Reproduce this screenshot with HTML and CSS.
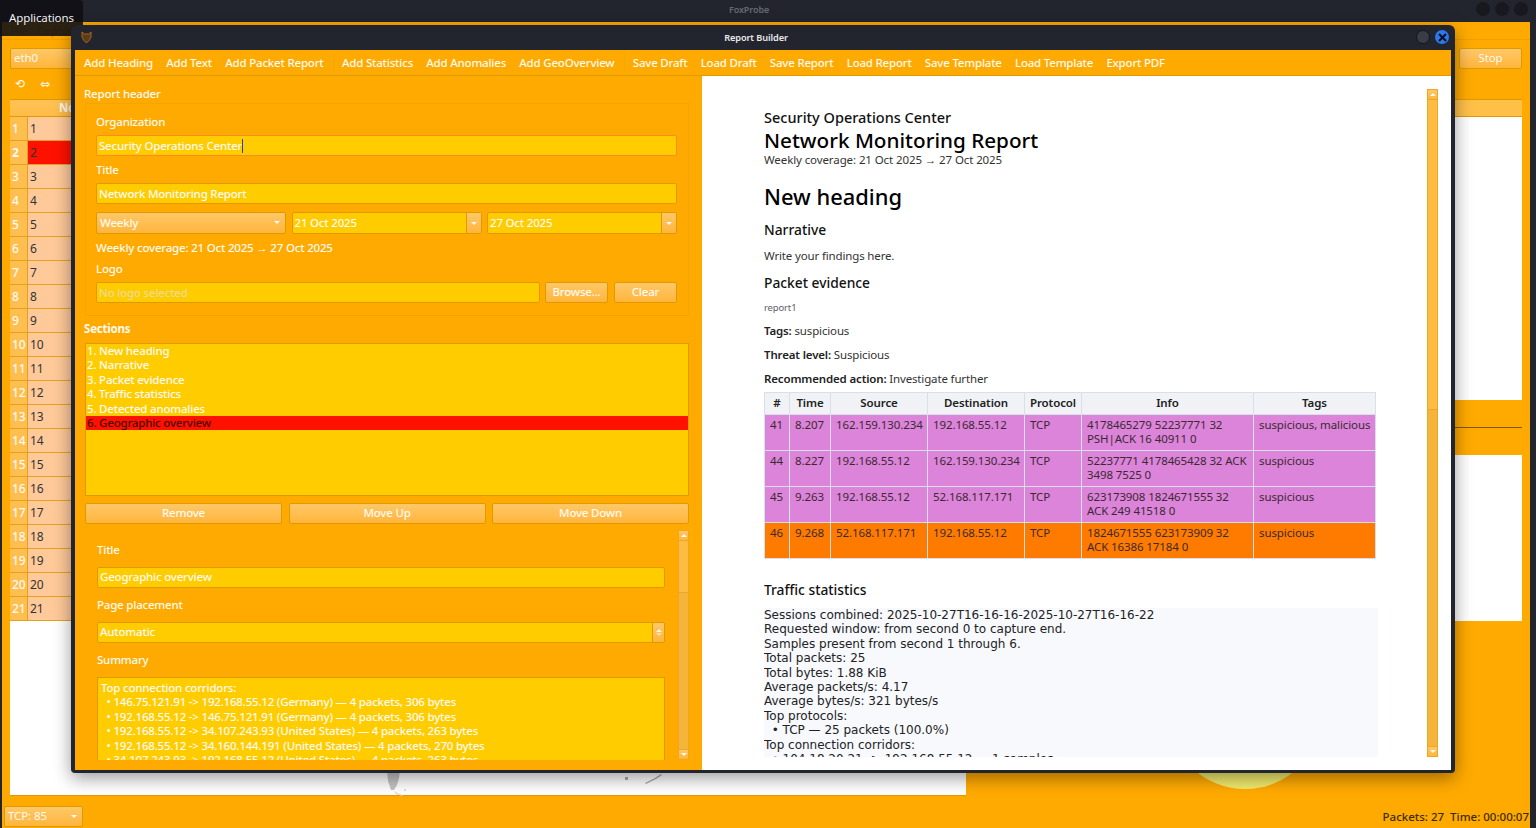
FILE: index.html
```html
<!doctype html>
<html lang="en">
<head>
  <meta charset="utf-8">
  <title>FoxProbe</title>
  <meta name="viewport" content="width=device-width, initial-scale=1">
  <link rel="stylesheet" href="styles.css">
</head>
<body>
  <div class="app">
    <div class="app-title">
      <span>FoxProbe</span>
      <div class="win-dots"><i></i><i></i><i></i></div>
    </div>
    <div class="app-body">
      <div class="menubar"><span>File</span><span>Capture</span></div>
      <div class="capture-bar">
        <div class="btn-combo iface">eth0</div>
        <button class="btn stop">Stop</button>
      </div>
      <div class="tool-icons"><span>⟲</span><span>⇔</span></div>
      <div class="split">
        <div class="packets">
          <div class="packets-head"><b>No.</b></div>
          <div class="row"><b>1</b><span>1</span></div>
          <div class="row active"><b>2</b><span>2</span></div>
          <div class="row"><b>3</b><span>3</span></div>
          <div class="row"><b>4</b><span>4</span></div>
          <div class="row"><b>5</b><span>5</span></div>
          <div class="row"><b>6</b><span>6</span></div>
          <div class="row"><b>7</b><span>7</span></div>
          <div class="row"><b>8</b><span>8</span></div>
          <div class="row"><b>9</b><span>9</span></div>
          <div class="row"><b>10</b><span>10</span></div>
          <div class="row"><b>11</b><span>11</span></div>
          <div class="row"><b>12</b><span>12</span></div>
          <div class="row"><b>13</b><span>13</span></div>
          <div class="row"><b>14</b><span>14</span></div>
          <div class="row"><b>15</b><span>15</span></div>
          <div class="row"><b>16</b><span>16</span></div>
          <div class="row"><b>17</b><span>17</span></div>
          <div class="row"><b>18</b><span>18</span></div>
          <div class="row"><b>19</b><span>19</span></div>
          <div class="row"><b>20</b><span>20</span></div>
          <div class="row"><b>21</b><span>21</span></div>
        </div>
        <div class="side">
          <div class="side-head"></div>
          <div class="side-top"></div>
          <div class="side-gap"><hr></div>
          <div class="side-bottom"></div>
        </div>
      </div>
      <div class="lower">
        <div class="map">
          <svg class="map-land" width="300" height="30" viewBox="0 0 300 30">
            <path d="M7 0h13l-1 8 -2 7 -3 5 -3 0 -3 -9z" fill="#c4c4c4"/>
            <path d="M14 21l5 3 4 1 -1 1 -6 -2z" fill="#d4d4d4"/>
            <rect x="24" y="19" width="2" height="2" fill="#ddd"/>
            <rect x="245" y="7" width="3" height="3" fill="#aaa"/>
            <path d="M265 13l10 -5 6 -4 1 1 -6 4 -10 5z" fill="#aaa"/>
          </svg>
        </div>
        <div class="pie-area"><div class="pie"></div></div>
      </div>
      <div class="statusbar">
        <div class="btn-combo proto">TCP: 85<i class="arrow"></i></div>
        <span class="counters">Packets: 27&nbsp; Time: 00:00:07</span>
      </div>
    </div>
  </div>

  <div class="tooltip">Applications</div>

  <div class="dialog">
    <div class="dialog-title">
      <svg class="fox" width="11" height="13" viewBox="0 0 11 13">
        <path d="M1 1l2.500 2h4L10 1v5L8.500 9 5.500 12 2.500 9 1 6z" fill="#5a3d1c" stroke="#a8661a" stroke-width="1"/>
      </svg>
      <span>Report Builder</span>
      <div class="dialog-btns">
        <i class="dot-min"></i>
        <i class="dot-close">
          <svg width="9" height="9" viewBox="0 0 9 9"><path d="M1 1l7 7M8 1l-7 7" stroke="#0a0f1a" stroke-width="2"/></svg>
        </i>
      </div>
    </div>
    <div class="dialog-inner">
      <div class="actions">
        <span>Add Heading</span><span>Add Text</span><span>Add Packet Report</span><u></u>
        <span>Add Statistics</span><span>Add Anomalies</span><span>Add GeoOverview</span><u></u>
        <span>Save Draft</span><span>Load Draft</span><span>Save Report</span><span>Load Report</span>
        <span>Save Template</span><span>Load Template</span><span>Export PDF</span>
      </div>
      <div class="dialog-main">
        <div class="editor">
          <div class="lbl head-lbl">Report header</div>
          <div class="group">
            <div class="lbl">Organization</div>
            <div class="input focus">Security Operations Center<i class="caret"></i></div>
            <div class="lbl l-title">Title</div>
            <div class="input">Network Monitoring Report</div>
            <div class="period">
              <div class="btn-combo">Weekly<i class="arrow"></i></div>
              <div class="input date">21 Oct 2025<em><i class="arrow"></i></em></div>
              <div class="input date">27 Oct 2025<em><i class="arrow"></i></em></div>
            </div>
            <div class="lbl l-cover">Weekly coverage: 21 Oct 2025 → 27 Oct 2025</div>
            <div class="lbl l-logo">Logo</div>
            <div class="logo-row">
              <div class="input empty">No logo selected</div>
              <button class="btn">Browse...</button>
              <button class="btn">Clear</button>
            </div>
          </div>
          <div class="lbl l-sections">Sections</div>
          <div class="section-list">
            <div>1. New heading</div>
            <div>2. Narrative</div>
            <div>3. Packet evidence</div>
            <div>4. Traffic statistics</div>
            <div>5. Detected anomalies</div>
            <div class="sel">6. Geographic overview</div>
          </div>
          <div class="section-btns">
            <button class="btn">Remove</button>
            <button class="btn">Move Up</button>
            <button class="btn">Move Down</button>
          </div>
          <div class="props">
            <div class="props-form">
              <div class="lbl">Title</div>
              <div class="input p-gap">Geographic overview</div>
              <div class="lbl p-lbl">Page placement</div>
              <div class="input p-gap spin">Automatic<em><i class="arrow up"></i><i class="arrow faint"></i></em></div>
              <div class="lbl p-lbl">Summary</div>
              <div class="summary p-gap">Top connection corridors:
  • 146.75.121.91 -&gt; 192.168.55.12 (Germany) — 4 packets, 306 bytes
  • 192.168.55.12 -&gt; 146.75.121.91 (Germany) — 4 packets, 306 bytes
  • 192.168.55.12 -&gt; 34.107.243.93 (United States) — 4 packets, 263 bytes
  • 192.168.55.12 -&gt; 34.160.144.191 (United States) — 4 packets, 270 bytes
  • 34.107.243.93 -&gt; 192.168.55.12 (United States) — 4 packets, 263 bytes</div>
            </div>
            <div class="scrollbar small">
              <div class="sb-btn"><i class="arrow up"></i></div>
              <div class="sb-handle"></div>
              <div class="sb-track"></div>
              <div class="sb-btn"><i class="arrow"></i></div>
            </div>
          </div>
        </div>
        <div class="preview">
          <div class="doc">
            <div class="doc-org">Security Operations Center</div>
            <div class="doc-title">Network Monitoring Report</div>
            <div class="doc-cover">Weekly coverage: 21 Oct 2025 → 27 Oct 2025</div>
            <h1>New heading</h1>
            <h2>Narrative</h2>
            <p class="p-write">Write your findings here.</p>
            <h2 class="h-packet">Packet evidence</h2>
            <p class="p-small">report1</p>
            <p class="p-meta"><b>Tags:</b> suspicious</p>
            <p class="p-meta"><b>Threat level:</b> Suspicious</p>
            <p class="p-meta"><b>Recommended action:</b> Investigate further</p>
            <table>
              <thead>
                <tr>
                  <th class="c-num">#</th><th class="c-time">Time</th><th class="c-ip">Source</th><th class="c-ip">Destination</th>
                  <th class="c-proto">Protocol</th><th class="c-info">Info</th><th>Tags</th>
                </tr>
              </thead>
              <tbody>
                <tr class="pink"><td>41</td><td>8.207</td><td>162.159.130.234</td><td>192.168.55.12</td><td>TCP</td><td>4178465279 52237771 32 PSH|ACK 16 40911 0</td><td>suspicious, malicious</td></tr>
                <tr class="pink"><td>44</td><td>8.227</td><td>192.168.55.12</td><td>162.159.130.234</td><td>TCP</td><td>52237771 4178465428 32 ACK 3498 7525 0</td><td>suspicious</td></tr>
                <tr class="pink"><td>45</td><td>9.263</td><td>192.168.55.12</td><td>52.168.117.171</td><td>TCP</td><td>623173908 1824671555 32 ACK 249 41518 0</td><td>suspicious</td></tr>
                <tr class="amber"><td>46</td><td>9.268</td><td>52.168.117.171</td><td>192.168.55.12</td><td>TCP</td><td>1824671555 623173909 32 ACK 16386 17184 0</td><td>suspicious</td></tr>
              </tbody>
            </table>
            <h2 class="h-traffic">Traffic statistics</h2>
            <pre>Sessions combined: 2025-10-27T16-16-16-2025-10-27T16-16-22
Requested window: from second 0 to capture end.
Samples present from second 1 through 6.
Total packets: 25
Total bytes: 1.88 KiB
Average packets/s: 4.17
Average bytes/s: 321 bytes/s
Top protocols:
  • TCP — 25 packets (100.0%)
Top connection corridors:
  • 104.18.20.21 -&gt; 192.168.55.12 — 1 samples</pre>
          </div>
          <div class="scrollbar">
            <div class="sb-btn"><i class="arrow up"></i></div>
            <div class="sb-handle"></div>
            <div class="sb-track"></div>
            <div class="sb-btn"><i class="arrow"></i></div>
          </div>
        </div>
      </div>
    </div>
  </div>
</body>
</html>
```

FILE: styles.css
```css
:root {
  --orange: #ffaa00;
  --yellow: #ffcc00;
  --dark: #23252e;
  --line: #e09a00;
  --light: #fffaf0;
  --btn-top: #ffc868;
  --btn-bottom: #ffb53c;
}
* { box-sizing: border-box; }
html, body { height: 100%; }
body {
  margin: 0;
  overflow: hidden;
  font: 11.5px/17px "Noto Sans", sans-serif;
  letter-spacing: -0.1px;
  color: var(--light);
  background: var(--dark);
}
button { font: inherit; letter-spacing: inherit; color: inherit; padding: 0; }

/* background window */
.app { position: absolute; inset: 0; display: flex; flex-direction: column; }
.app-title {
  height: 22px; flex: none;
  display: flex; align-items: center; justify-content: center;
  position: relative;
  font-size: 9px; font-weight: 600; color: #666a72;
  padding: 0 38px 3px 0;
}
.win-dots { position: absolute; right: 8px; top: 2px; display: flex; gap: 5px; }
.win-dots i { width: 14px; height: 14px; border-radius: 50%; background: #17191f; }
.app-body {
  flex: 1; margin: 0 6px 0 2px;
  background: var(--orange);
  display: flex; flex-direction: column;
  padding: 0 8px;
}
.menubar {
  height: 18px; margin: 0 -8px; padding: 0 8px;
  display: flex; gap: 9px;
  border-bottom: 1px solid #f0a000;
  color: #c98a10;
}
.capture-bar { display: flex; justify-content: space-between; padding-top: 8px; height: 29px; }
.iface { width: 200px; }
.stop { width: 63px; }
.tool-icons { height: 30px; display: flex; gap: 15px; padding: 7px 0 0 5px; font: 12px/17px "DejaVu Sans", sans-serif; }
.split { height: 522px; display: flex; }
.packets { width: 1000px; flex: none; }
.packets-head {
  height: 18px; padding-left: 49px;
  background: linear-gradient(#ffc355, #ffbc48);
  border: 1px solid var(--line); border-width: 1px 0;
  line-height: 16px;
}
.row { height: 24px; display: flex; border-bottom: 1px solid #e6a11c; font-size: 12px; }
.row b {
  width: 18px; flex: none; padding-left: 2px;
  font-weight: 500; line-height: 24px;
  background: #ffbe50; border-right: 1px solid #e6a11c;
}
.row span { flex: 1; padding-left: 2px; background: #ffc999; color: #333; line-height: 24px; }
.row.active b { font-weight: 700; }
.row.active span { background: #ff1100; }
.side { flex: 1; display: flex; flex-direction: column; }
.side-head { height: 18px; background: #ffc048; border: 1px solid var(--line); border-width: 1px 0; }
.side-top { height: 283px; background: #fff; }
.side-gap { height: 55px; display: flex; align-items: center; }
.side-gap hr { width: 100%; margin: 0; border: 0; border-top: 1px solid #7a5a10; }
.side-bottom { flex: 1; background: #fff; }
.lower { height: 175px; display: flex; }
.map { width: 956px; background: #fff; border-bottom: 1px solid var(--line); position: relative; }
.map-land { position: absolute; left: 370px; top: 149px; }
.pie-area { flex: 1; position: relative; overflow: hidden; }
.pie {
  position: absolute; left: 201px; top: 11px;
  width: 156px; height: 157px; border-radius: 50%;
  background: #f1ea6c;
}
.statusbar { flex: 1; display: flex; align-items: flex-end; justify-content: space-between; margin: 0 -7px 0 -6px; padding-bottom: 1px; }
.proto { width: 79px; height: 20px; color: var(--light); }
.counters { color: #3d2c00; line-height: 20px; letter-spacing: 0; font-weight: 500; }

.tooltip {
  position: absolute; left: 0; top: 0;
  width: 83px; height: 36px;
  padding: 9px 0 0 9px;
  background: rgba(15, 15, 20, 0.88);
  border-radius: 0 4px 4px 0;
  color: #f2f2f2;
}

/* controls */
.btn, .btn-combo {
  height: 21px; line-height: 18px;
  border: 1px solid var(--line); border-radius: 2px;
  background: linear-gradient(var(--btn-top), var(--btn-bottom));
  text-align: center;
}
.btn { padding-bottom: 2px; }
.btn-combo { text-align: left; padding-left: 3px; position: relative; }
.arrow {
  display: block; width: 0; height: 0;
  border: 3px solid transparent; border-top: 3px solid var(--light); border-bottom: 0;
}
.arrow.up { border-top: 0; border-bottom: 3px solid var(--light); }
.arrow.faint { border-top-color: #ffdf9c; }
.btn-combo > .arrow { position: absolute; right: 5px; top: 8px; }
.input {
  height: 21px; line-height: 20px; padding-left: 2px;
  background: var(--yellow);
  border: 1px solid var(--line); border-radius: 2px;
  position: relative; white-space: nowrap; overflow: hidden;
}
.input.focus { border-color: #ff8a20; }
.caret { display: inline-block; width: 1px; height: 14px; background: #2a3fb0; vertical-align: -3px; }
.input.empty { color: #f0d890; line-height: 19px; }
.input em {
  position: absolute; right: 0; top: 0; bottom: 0;
  width: 15px; font-style: normal;
  display: flex; flex-direction: column; align-items: center; justify-content: center; gap: 2px;
  background: linear-gradient(var(--btn-top), var(--btn-bottom));
  border-left: 1px solid var(--line);
}

/* dialog */
.dialog {
  position: absolute; left: 71px; top: 25px;
  width: 1384px; height: 748px;
  background: var(--dark);
  border-radius: 6px 6px 4px 4px;
  box-shadow: 0 5px 18px rgba(0, 0, 0, 0.4);
  display: flex; flex-direction: column;
}
.dialog-title {
  height: 25px; flex: none; position: relative;
  display: flex; align-items: center; justify-content: center;
  padding-right: 14px;
  font-size: 9.2px; font-weight: 600; color: #e8e8ea;
}
.fox { position: absolute; left: 10px; top: 6px; }
.dialog-btns { position: absolute; right: 6px; top: 5px; display: flex; gap: 5px; }
.dialog-btns i { width: 14px; height: 14px; border-radius: 50%; display: flex; align-items: center; justify-content: center; }
.dot-min { background: #3a3d47; border: 1px solid #15161b; }
.dot-close { background: #2b78f0; }
.dialog-inner {
  flex: 1; min-height: 0; margin: 0 4px 3px;
  background: var(--orange);
  display: flex; flex-direction: column;
  font-weight: 500; letter-spacing: -0.2px;
}
.actions {
  height: 26px; flex: none;
  display: flex; align-items: center; gap: 13.2px;
  padding-left: 9px;
  border-bottom: 1px solid var(--line);
}
.actions span { white-space: nowrap; }
.actions u { width: 1px; height: 18px; margin: 0 -5px 0 -4px; background: #f4a800; }
.dialog-main { flex: 1; min-height: 0; display: flex; }

.editor { width: 627px; flex: none; padding: 10px 13px 0 10px; overflow: hidden; }
.lbl { line-height: 15px; padding-bottom: 2px; }
.head-lbl { margin-left: -1px; }
.group {
  height: 213px; padding: 10px 11px 0 10px;
  border: 1px solid #f5a500;
}
.group .input { margin-top: 4px; }
.l-title { margin-top: 6px; }
.period { display: grid; grid-template-columns: 190px 190px 190px; gap: 5.5px; margin-top: 8px; }
.period .btn-combo, .period .input { margin-top: 0; height: 22px; }
.period .btn-combo { line-height: 20px; }
.l-cover { margin-top: 6px; }
.l-logo { margin-top: 4px; }
.logo-row { display: flex; gap: 5px; margin-top: 4px; }
.logo-row .input { flex: 1; margin-top: 0; }
.logo-row .btn { width: 63px; flex: none; }
.logo-row .btn:last-child { margin-left: 1px; }
.l-sections { margin-top: 5px; font-weight: 700; margin-left: -1px; }
.section-list {
  height: 153px; margin-top: 5px;
  background: var(--yellow);
  border: 1px solid var(--line);
  line-height: 14.4px;
}
.section-list div { padding-left: 1px; }
.section-list .sel { background: #ff1100; color: #4a0a00; }
.section-btns { display: grid; grid-template-columns: repeat(3, 1fr); gap: 6.5px; margin-top: 7px; }
.props { height: 230px; margin-top: 6px; display: flex; }
.props-form { flex: 1; min-width: 0; padding: 12px 13px 0 12px; overflow: hidden; }
.p-gap { margin-top: 8px; line-height: 18px; }
.p-lbl { margin-top: 9px; }
.spin em { gap: 1px; width: 12px; }
.summary {
  height: 120px; padding: 3px 3px;
  background: var(--yellow);
  border: 1px solid var(--line); border-bottom: 0;
  line-height: 14.4px; white-space: pre;
}

.scrollbar { width: 11px; flex: none; display: flex; flex-direction: column; }
.sb-btn {
  height: 11px; flex: none;
  display: flex; align-items: center; justify-content: center;
  background: linear-gradient(var(--btn-top), var(--btn-bottom));
  border: 1px solid #eda81f;
}
.sb-handle { height: 310px; background: #ffbc45; border: 1px solid #eda81f; border-top: 0; }
.sb-track { flex: 1; background: #f5b53d; border: 1px solid #eda81f; border-width: 0 1px; }
.scrollbar.small .sb-handle { height: 52px; }

/* preview */
.preview {
  flex: 1; min-width: 0;
  background: #fff;
  padding: 13px 13px 13px 62px;
  display: flex;
  color: #333;
  font-weight: 400; letter-spacing: -0.1px;
}
.doc { flex: 1; min-width: 0; padding-top: 19px; overflow: hidden; }
.doc-org { font-size: 14.5px; line-height: 18px; font-weight: 500; color: #111; letter-spacing: 0; }
.doc-title { font-size: 20.7px; line-height: 25px; font-weight: 500; color: #000; margin-top: 2px; letter-spacing: 0; }
.doc-cover { line-height: 14px; }
h1 { margin: 15px 0 0; font-size: 21.9px; line-height: 30px; font-weight: 500; color: #000; letter-spacing: 0; }
h2 { margin: 9px 0 0; font-size: 13.8px; line-height: 18px; font-weight: 500; color: #111; letter-spacing: 0; }
p { margin: 8px 0 0; line-height: 16px; letter-spacing: -0.15px; }
p b { font-weight: 600; color: #222; }
.p-write { margin-top: 9px; }
.h-packet { margin-top: 10px; }
.p-small { margin-top: 9px; font-size: 9.5px; line-height: 14px; color: #5e5e6a; }
table {
  width: 612px; margin-top: 5px;
  border-collapse: collapse; table-layout: fixed;
  line-height: 14.4px;
}
th, td { border: 1px solid #d9dfea; padding: 3px 2px 3px 5px; text-align: left; vertical-align: top; }
th { height: 22px; padding: 3px 0; background: #f0f2f5; text-align: center; font-weight: 600; color: #222; }
td { height: 36px; color: #3a2a30; }
.c-num { width: 25px; }
.c-time { width: 41px; }
.c-ip { width: 97px; }
.c-proto { width: 57px; }
.c-info { width: 172px; }
.pink td { background: #dc84da; }
.amber td { background: #ff7b00; }
.h-traffic { margin-top: 22px; }
pre {
  width: 614px; margin: 9px 0 0;
  background: #f7f9fd;
  font: 12px/14.4px "DejaVu Sans", sans-serif;
  letter-spacing: 0;
  color: #222;
}
```
